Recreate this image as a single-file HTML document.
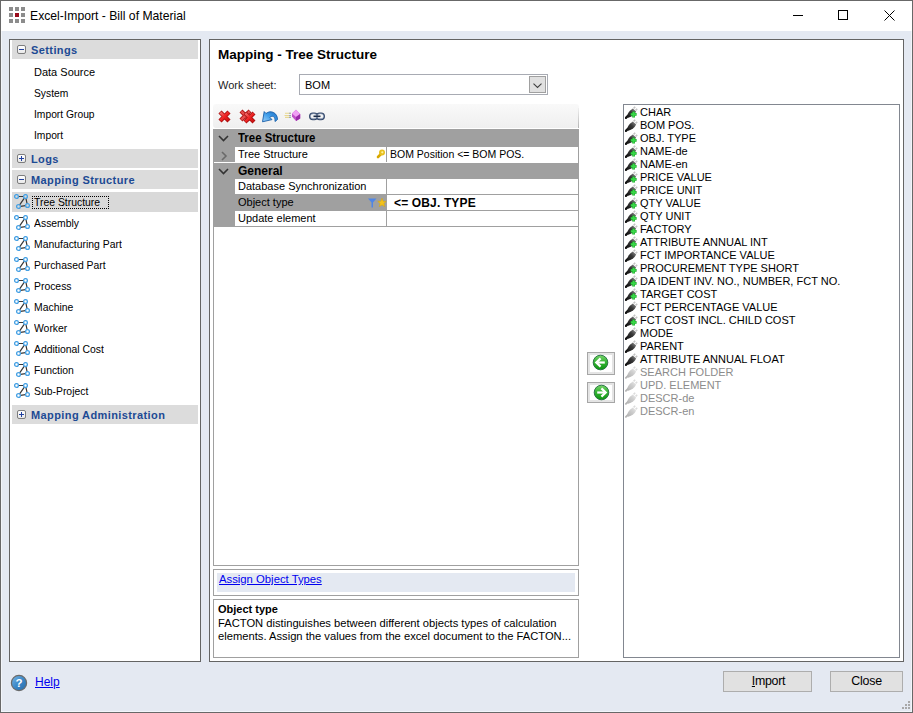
<!DOCTYPE html>
<html><head><meta charset="utf-8">
<style>
*{margin:0;padding:0;box-sizing:border-box}
html,body{width:913px;height:713px;overflow:hidden;background:#e4e9f2}
body{position:relative;font-family:"Liberation Sans",sans-serif;font-size:11px;color:#000}
.a{position:absolute;white-space:nowrap}
#win{position:absolute;left:0;top:0;width:913px;height:713px;border:1px solid #686868;background:#e4e9f2}#win:after{content:"";position:absolute;left:0;top:0;right:0;bottom:0;border:1px solid #f2f5fa}
#title{position:absolute;left:1px;top:1px;width:911px;height:30px;background:#fff}
.box{position:absolute;background:#fff;border:1px solid #646464}
.hdr{position:absolute;left:2px;width:186px;height:19px;background:#dcdcdc;color:#1c4a94;font-weight:bold;font-size:11px;letter-spacing:.4px}
.hdr span{position:absolute;left:19px;top:4px}
.exp{position:absolute;left:5px;top:5px;width:9px;height:9px;border:1px solid #7d7d7d;border-radius:2px;background:linear-gradient(#fff,#e8e8e8)}
.exp:before{content:"";position:absolute;left:1px;top:3px;width:5px;height:1px;background:#2040a0}
.exp.p:after{content:"";position:absolute;left:3px;top:1px;width:1px;height:5px;background:#2040a0}
.it{position:absolute;left:24px;font-size:11px}
.ti{position:absolute;left:24px;font-size:11px;transform:scaleX(.945);transform-origin:0 0}
.ticon{position:absolute;left:4px;width:17px;height:16px}
.grid .cat{position:absolute;left:0;width:365px;background:#a0a0a0;font-weight:bold;font-size:12px}
.grid .row{position:absolute;left:0;width:366px;height:16px}
.li{position:absolute;left:16px;font-size:11px}
.lic{position:absolute;left:1px;width:13px;height:13px}
.btn{position:absolute;background:#e1e1e1;border:1px solid #adadad;text-align:center;font-size:12px}
</style></head><body>
<svg width="0" height="0" style="position:absolute">
<defs>
<linearGradient id="pg" x1="0" y1="1" x2="1" y2="0"><stop offset="0" stop-color="#111"/><stop offset=".55" stop-color="#3a3a3a"/><stop offset="1" stop-color="#9a9a9a"/></linearGradient>
<linearGradient id="pgd" x1="0" y1="1" x2="1" y2="0"><stop offset="0" stop-color="#b0b0b0"/><stop offset=".6" stop-color="#cfcfcf"/><stop offset="1" stop-color="#ececec"/></linearGradient>
<symbol id="plug" viewBox="0 0 13 13"><path d="M0.9 11.9L2.9 9.9" stroke="#111" stroke-width="2.2" stroke-linecap="round"/><path d="M1.8 10.8C2.6 7.5 4.5 4.6 7.8 2.6L11.2 5.6C9.6 8.8 7 10.8 3.2 11.8Z" fill="url(#pg)"/><path d="M8.6 2.4L10.2 0.8M10.6 4.4L12.2 2.8" stroke="#c4c4c4" stroke-width="1.6"/></symbol>
<symbol id="plugP" viewBox="0 0 13 13"><use href="#plug"/><path d="M8.6 5.4V11.4M5.6 8.4H11.6" stroke="#1faa2a" stroke-width="2.8"/><path d="M8.6 5.9V10.9M6.1 8.4H11.1" stroke="#3ad84a" stroke-width="1.6"/></symbol>
<symbol id="plugD" viewBox="0 0 13 13"><path d="M0.9 11.9L2.9 9.9" stroke="#b4b4b4" stroke-width="1.8" stroke-linecap="round"/><path d="M1.8 10.8C2.6 7.5 4.5 4.6 7.8 2.6L11.2 5.6C9.6 8.8 7 10.8 3.2 11.8Z" fill="url(#pgd)"/><path d="M8.6 2.4L10.2 0.8M10.6 4.4L12.2 2.8" stroke="#dcdcdc" stroke-width="1.6"/></symbol>
<linearGradient id="gg" x1="0" y1="0" x2="0" y2="1"><stop offset="0" stop-color="#7ad46a"/><stop offset=".45" stop-color="#36b636"/><stop offset="1" stop-color="#0c9410"/></linearGradient>
<symbol id="garrL" viewBox="0 0 17 17"><circle cx="8.5" cy="8.5" r="7.3" fill="url(#gg)" stroke="#1f6a40" stroke-width="0.9"/><path d="M4.8 8.5H12.8" stroke="#fff" stroke-width="2.2"/><path d="M8.6 4.4L4.3 8.5L8.6 12.6" stroke="#fff" stroke-width="2.2" fill="none"/></symbol>
<symbol id="garrR" viewBox="0 0 17 17"><circle cx="8.5" cy="8.5" r="7.3" fill="url(#gg)" stroke="#1f6a40" stroke-width="0.9"/><path d="M4.2 8.5H12.2" stroke="#fff" stroke-width="2.2"/><path d="M8.4 4.4L12.7 8.5L8.4 12.6" stroke="#fff" stroke-width="2.2" fill="none"/></symbol>
</defs></svg>
<div id="win"></div>
<div id="title">
  <svg class="a" style="left:7px;top:5px" width="17" height="17" viewBox="0 0 17 17"><g fill="#8c8c8c"><rect x="1" y="1" width="4" height="4"/><rect x="7" y="1" width="4" height="4"/><rect x="13" y="1" width="4" height="4"/><rect x="1" y="7" width="4" height="4"/><rect x="13" y="7" width="4" height="4"/><rect x="1" y="13" width="4" height="4"/><rect x="7" y="13" width="4" height="4"/><rect x="13" y="13" width="4" height="4"/></g><rect x="7" y="7" width="4" height="4" fill="#9a0c1c"/></svg>
  <div class="a" style="left:29px;top:8px;font-size:12.2px;color:#000">Excel-Import - Bill of Material</div>
  <div class="a" style="left:792px;top:14px;width:10px;height:1px;background:#000"></div>
  <div class="a" style="left:837px;top:9px;width:10px;height:10px;border:1px solid #000"></div>
  <svg class="a" style="left:883px;top:9px" width="11" height="11" viewBox="0 0 11 11"><path d="M0.5 0.5L10.5 10.5M10.5 0.5L0.5 10.5" stroke="#000" stroke-width="1"/></svg>
</div>

<!-- Left panel -->
<div class="box" style="left:9px;top:39px;width:192px;height:623px">
  <div class="hdr" style="top:0px"><div class="exp"></div><span>Settings</span></div>
  <div class="it" style="top:26px">Data Source</div>
  <div class="it" style="top:47px;transform:scaleX(.935);transform-origin:0 0">System</div>
  <div class="it" style="top:68px;transform:scaleX(.935);transform-origin:0 0">Import Group</div>
  <div class="it" style="top:89px;transform:scaleX(.935);transform-origin:0 0">Import</div>
  <div class="hdr" style="top:109px"><div class="exp p"></div><span>Logs</span></div>
  <div class="hdr" style="top:130px"><div class="exp"></div><span>Mapping Structure</span></div>
  <div class="a" style="left:2px;top:152px;width:186px;height:20px;background:#d9d9d9"></div>
  <svg class="ticon" style="top:154px" viewBox="0 0 17 16" width="17" height="16"><path d="M4.4 2.5H9.6M10.35 4.14L5.65 10.86M11.93 4.45L13.07 9.55M6.49 12.28L11.51 11.72" stroke="#383838" stroke-width="1.2" fill="none"/><g fill="none" stroke="#44a0e4" stroke-width="1.3"><circle cx="2.5" cy="2.5" r="1.9"/><circle cx="11.5" cy="2.5" r="1.9"/><circle cx="4.5" cy="12.5" r="1.9"/><circle cx="13.5" cy="11.5" r="1.9"/></g></svg>
  <div class="a" style="left:22px;top:156px;width:77px;height:13px;border:1px dotted #000"></div><div class="ti" style="top:156px">Tree Structure</div>
  <svg class="ticon" style="top:175px" viewBox="0 0 17 16" width="17" height="16"><path d="M4.4 2.5H9.6M10.35 4.14L5.65 10.86M11.93 4.45L13.07 9.55M6.49 12.28L11.51 11.72" stroke="#383838" stroke-width="1.2" fill="none"/><g fill="none" stroke="#44a0e4" stroke-width="1.3"><circle cx="2.5" cy="2.5" r="1.9"/><circle cx="11.5" cy="2.5" r="1.9"/><circle cx="4.5" cy="12.5" r="1.9"/><circle cx="13.5" cy="11.5" r="1.9"/></g></svg>
  <div class="ti" style="top:177px">Assembly</div>
  <svg class="ticon" style="top:196px" viewBox="0 0 17 16" width="17" height="16"><path d="M4.4 2.5H9.6M10.35 4.14L5.65 10.86M11.93 4.45L13.07 9.55M6.49 12.28L11.51 11.72" stroke="#383838" stroke-width="1.2" fill="none"/><g fill="none" stroke="#44a0e4" stroke-width="1.3"><circle cx="2.5" cy="2.5" r="1.9"/><circle cx="11.5" cy="2.5" r="1.9"/><circle cx="4.5" cy="12.5" r="1.9"/><circle cx="13.5" cy="11.5" r="1.9"/></g></svg>
  <div class="ti" style="top:198px">Manufacturing Part</div>
  <svg class="ticon" style="top:217px" viewBox="0 0 17 16" width="17" height="16"><path d="M4.4 2.5H9.6M10.35 4.14L5.65 10.86M11.93 4.45L13.07 9.55M6.49 12.28L11.51 11.72" stroke="#383838" stroke-width="1.2" fill="none"/><g fill="none" stroke="#44a0e4" stroke-width="1.3"><circle cx="2.5" cy="2.5" r="1.9"/><circle cx="11.5" cy="2.5" r="1.9"/><circle cx="4.5" cy="12.5" r="1.9"/><circle cx="13.5" cy="11.5" r="1.9"/></g></svg>
  <div class="ti" style="top:219px">Purchased Part</div>
  <svg class="ticon" style="top:238px" viewBox="0 0 17 16" width="17" height="16"><path d="M4.4 2.5H9.6M10.35 4.14L5.65 10.86M11.93 4.45L13.07 9.55M6.49 12.28L11.51 11.72" stroke="#383838" stroke-width="1.2" fill="none"/><g fill="none" stroke="#44a0e4" stroke-width="1.3"><circle cx="2.5" cy="2.5" r="1.9"/><circle cx="11.5" cy="2.5" r="1.9"/><circle cx="4.5" cy="12.5" r="1.9"/><circle cx="13.5" cy="11.5" r="1.9"/></g></svg>
  <div class="ti" style="top:240px">Process</div>
  <svg class="ticon" style="top:259px" viewBox="0 0 17 16" width="17" height="16"><path d="M4.4 2.5H9.6M10.35 4.14L5.65 10.86M11.93 4.45L13.07 9.55M6.49 12.28L11.51 11.72" stroke="#383838" stroke-width="1.2" fill="none"/><g fill="none" stroke="#44a0e4" stroke-width="1.3"><circle cx="2.5" cy="2.5" r="1.9"/><circle cx="11.5" cy="2.5" r="1.9"/><circle cx="4.5" cy="12.5" r="1.9"/><circle cx="13.5" cy="11.5" r="1.9"/></g></svg>
  <div class="ti" style="top:261px">Machine</div>
  <svg class="ticon" style="top:280px" viewBox="0 0 17 16" width="17" height="16"><path d="M4.4 2.5H9.6M10.35 4.14L5.65 10.86M11.93 4.45L13.07 9.55M6.49 12.28L11.51 11.72" stroke="#383838" stroke-width="1.2" fill="none"/><g fill="none" stroke="#44a0e4" stroke-width="1.3"><circle cx="2.5" cy="2.5" r="1.9"/><circle cx="11.5" cy="2.5" r="1.9"/><circle cx="4.5" cy="12.5" r="1.9"/><circle cx="13.5" cy="11.5" r="1.9"/></g></svg>
  <div class="ti" style="top:282px">Worker</div>
  <svg class="ticon" style="top:301px" viewBox="0 0 17 16" width="17" height="16"><path d="M4.4 2.5H9.6M10.35 4.14L5.65 10.86M11.93 4.45L13.07 9.55M6.49 12.28L11.51 11.72" stroke="#383838" stroke-width="1.2" fill="none"/><g fill="none" stroke="#44a0e4" stroke-width="1.3"><circle cx="2.5" cy="2.5" r="1.9"/><circle cx="11.5" cy="2.5" r="1.9"/><circle cx="4.5" cy="12.5" r="1.9"/><circle cx="13.5" cy="11.5" r="1.9"/></g></svg>
  <div class="ti" style="top:303px">Additional Cost</div>
  <svg class="ticon" style="top:322px" viewBox="0 0 17 16" width="17" height="16"><path d="M4.4 2.5H9.6M10.35 4.14L5.65 10.86M11.93 4.45L13.07 9.55M6.49 12.28L11.51 11.72" stroke="#383838" stroke-width="1.2" fill="none"/><g fill="none" stroke="#44a0e4" stroke-width="1.3"><circle cx="2.5" cy="2.5" r="1.9"/><circle cx="11.5" cy="2.5" r="1.9"/><circle cx="4.5" cy="12.5" r="1.9"/><circle cx="13.5" cy="11.5" r="1.9"/></g></svg>
  <div class="ti" style="top:324px">Function</div>
  <svg class="ticon" style="top:343px" viewBox="0 0 17 16" width="17" height="16"><path d="M4.4 2.5H9.6M10.35 4.14L5.65 10.86M11.93 4.45L13.07 9.55M6.49 12.28L11.51 11.72" stroke="#383838" stroke-width="1.2" fill="none"/><g fill="none" stroke="#44a0e4" stroke-width="1.3"><circle cx="2.5" cy="2.5" r="1.9"/><circle cx="11.5" cy="2.5" r="1.9"/><circle cx="4.5" cy="12.5" r="1.9"/><circle cx="13.5" cy="11.5" r="1.9"/></g></svg>
  <div class="ti" style="top:345px">Sub-Project</div>
  <div class="hdr" style="top:365px"><div class="exp p"></div><span>Mapping Administration</span></div>
</div>

<!-- Right panel -->
<div class="box" style="left:209px;top:39px;width:695px;height:623px">
  <div class="a" style="left:8px;top:7px;font-size:13.5px;font-weight:bold">Mapping - Tree Structure</div>
  <div class="a" style="left:8px;top:39px;color:#1c1c24">Work sheet:</div>
  <div class="a" style="left:89px;top:34px;width:249px;height:21px;border:1px solid #a8abb3;background:#fff">
    <div class="a" style="left:5px;top:4px">BOM</div>
    <div class="a" style="left:229px;top:1px;width:17px;height:17px;background:#e0e0e0;border:1px solid #a0a0a0">
      <svg class="a" style="left:3px;top:6px" width="9" height="6" viewBox="0 0 9 6"><path d="M0.5 0.7L4.5 4.5L8.5 0.7" fill="none" stroke="#404040" stroke-width="1.1"/></svg>
    </div>
  </div>
  <!-- toolbar -->
  <div class="a" style="left:3px;top:64px;width:366px;height:24px;background:linear-gradient(#f9f9f9,#efefef);border-radius:3px"></div><div class="a" style="left:368px;top:68px;width:1px;height:20px;background:linear-gradient(#f0f0f0,#b4b4b4)"></div>
  <svg class="a" style="left:3px;top:64px" width="120" height="24" viewBox="0 0 120 24">
    <defs>
      <linearGradient id="rx" x1="0" y1="0" x2="1" y2="1"><stop offset="0" stop-color="#f07070"/><stop offset=".5" stop-color="#f02424"/><stop offset="1" stop-color="#c81010"/></linearGradient>
      <linearGradient id="ba" x1="0" y1="1" x2="1" y2="0"><stop offset="0" stop-color="#9fd2fa"/><stop offset=".5" stop-color="#3f9eea"/><stop offset="1" stop-color="#1e6cc0"/></linearGradient>
    </defs>
    <g stroke-linecap="butt">
      <path d="M7 8L16 17M16 8L7 17" stroke="#a80c0c" stroke-width="4.4"/>
      <path d="M7.4 8.4L15.6 16.6M15.6 8.4L7.4 16.6" stroke="url(#rx)" stroke-width="2.8"/>
      <path d="M28 7L37 16M37 7L28 16" stroke="#a80c0c" stroke-width="4.2"/>
      <path d="M28.4 7.4L36.6 15.6M36.6 7.4L28.4 15.6" stroke="#e65050" stroke-width="2.6"/>
      <path d="M32 9L41 18M41 9L32 18" stroke="#a80c0c" stroke-width="4.2"/>
      <path d="M32.4 9.4L40.6 17.6M40.6 9.4L32.4 17.6" stroke="url(#rx)" stroke-width="2.6"/>
    </g>
    <path d="M64.5 15.5C64.5 9 58 5.5 53 9.5L51.2 7.6L49.5 17.8L59 15.6L56.8 13.4C59.5 11 62.5 12.5 62 17.5Z" fill="url(#ba)" stroke="#1a5fa8" stroke-width="0.9" stroke-linejoin="round"/>
    <path d="M72 9.3H78M71.5 11.5H78M72 13.4H78" stroke="#e8d890" stroke-width="1.1"/>
    <path d="M76 9.3H78M76 11.5H78M76 13.4H78" stroke="#a0a8b8" stroke-width="1.1"/>
    <path d="M83 5.8L87.2 10V14.5L83 17L79 12.5V9.5Z" fill="#c050c8"/>
    <path d="M83 5.8L87.2 10L83 13L79 9.5Z" fill="#f0a0f4"/>
    <path d="M87.2 10V14.5L83 17V13Z" fill="#9a2aa8"/>
    <rect x="96.8" y="9.2" width="7.6" height="6.2" rx="3.1" fill="none" stroke="#34486a" stroke-width="1.6"/>
    <rect x="103.6" y="9.2" width="7.6" height="6.2" rx="3.1" fill="none" stroke="#34486a" stroke-width="1.6"/>
    <rect x="97.4" y="9.8" width="6.4" height="5" rx="2.5" fill="none" stroke="#b8c8dc" stroke-width="0.6"/>
    <rect x="104.2" y="9.8" width="6.4" height="5" rx="2.5" fill="none" stroke="#b8c8dc" stroke-width="0.6"/>
    <path d="M100.5 12.3H107.5" stroke="#1e2e4a" stroke-width="1.6"/>
  </svg>
  <!-- grid -->
  <div class="a grid" style="left:3px;top:89px;width:366px;height:437px;border:1px solid #a0a0a0;border-top:none;background:#fff">
    <div class="cat" style="top:0;height:18px"><svg class="a" style="left:4px;top:6px" width="11" height="7" viewBox="0 0 11 7"><path d="M1 1L5.5 5.5L10 1" stroke="#333" stroke-width="1.6" fill="none"/></svg><div class="a" style="left:24px;top:2px;transform:scaleX(.952);transform-origin:0 0">Tree Structure</div></div>
    <div class="a" style="left:0;top:18px;width:21px;height:15px;background:#a0a0a0"></div>
    <svg class="a" style="left:7px;top:22px" width="7" height="10" viewBox="0 0 7 10"><path d="M1 1L5 5L1 9" stroke="#6a6a6a" stroke-width="1.6" fill="none"/></svg>
    <div class="a" style="left:172px;top:18px;width:1px;height:15px;background:#a0a0a0"></div>
    <div class="a" style="left:24px;top:19px">Tree Structure</div>
    <svg class="a" style="left:162px;top:20px" width="10" height="10" viewBox="0 0 10 10"><path d="M5 5L2 8" stroke="#d8a800" stroke-width="2.6" stroke-linecap="round"/><circle cx="6" cy="3.6" r="3" fill="#e8c020"/><circle cx="6.3" cy="3.3" r="1.1" fill="#fff2a0"/></svg>
    <div class="a" style="left:176px;top:19px;transform:scaleX(.955);transform-origin:0 0">BOM Position &lt;= BOM POS.</div>
    <div class="cat" style="top:34px;height:16px"><svg class="a" style="left:4px;top:5px" width="11" height="7" viewBox="0 0 11 7"><path d="M1 1L5.5 5.5L10 1" stroke="#333" stroke-width="1.6" fill="none"/></svg><div class="a" style="left:24px;top:1px">General</div></div>
    <div class="a" style="left:0;top:50px;width:21px;height:47px;background:#a0a0a0"></div>
    <div class="a" style="left:21px;top:65px;width:344px;height:1px;background:#a0a0a0"></div>
    <div class="a" style="left:21px;top:66px;width:151px;height:15px;background:#a0a0a0"></div>
    <div class="a" style="left:21px;top:81px;width:344px;height:1px;background:#a0a0a0"></div>
    <div class="a" style="left:0;top:97px;width:364px;height:1px;background:#a0a0a0"></div>
    <div class="a" style="left:172px;top:50px;width:1px;height:48px;background:#a0a0a0"></div>
    <div class="a" style="left:24px;top:51px">Database Synchronization</div>
    <div class="a" style="left:24px;top:67px">Object type</div>
    <svg class="a" style="left:153px;top:68px" width="20" height="11" viewBox="0 0 20 11"><path d="M1 1.5H9.5L6 5.5V10.5H4.5V5.5Z" fill="#4f86e6"/><path d="M15 1.2L16.2 4.2L19.2 4.4L16.9 6.4L17.7 9.6L15 7.9L12.3 9.6L13.1 6.4L10.8 4.4L13.8 4.2Z" fill="#f2c21c" stroke="#d9a400" stroke-width="0.5"/></svg>
    <div class="a" style="left:24px;top:83px">Update element</div>
    <div class="a" style="left:180px;top:67px;font-weight:bold;font-size:12px;letter-spacing:.15px">&lt;= OBJ. TYPE</div>
  </div>
  <!-- link -->
  <div class="a" style="left:3px;top:529px;width:366px;height:27px;border:1px solid #a0a0a0;background:#fff">
    <div class="a" style="left:3px;top:3px;width:358px;height:19px;background:#e4e9f2"></div>
    <div class="a" style="left:5px;top:3px;color:#0000f0;text-decoration:underline;font-size:11.3px">Assign Object Types</div>
  </div>
  <!-- description -->
  <div class="a" style="left:3px;top:559px;width:366px;height:59px;border:1px solid #a0a0a0;background:#fff">
    <div class="a" style="left:4px;top:3px;font-weight:bold">Object type</div>
    <div class="a" style="left:4px;top:17px;font-size:11.2px">FACTON distinguishes between different objects types of calculation</div>
    <div class="a" style="left:4px;top:30px;font-size:11.2px">elements. Assign the values from the excel document to the FACTON...</div>
  </div>
  <!-- arrow buttons -->
  <div class="a" style="left:377px;top:312px;width:28px;height:23px;background:#fff;border:1px solid #a6a6a6;box-shadow:inset 0 0 0 2px #e4e4e4"><svg class="a" style="left:4px;top:1px" width="17" height="17" viewBox="0 0 17 17"><use href="#garrL"/></svg></div>
  <div class="a" style="left:377px;top:342px;width:28px;height:21px;background:#fff;border:1px solid #a6a6a6;box-shadow:inset 0 0 0 2px #e4e4e4"><svg class="a" style="left:5px;top:1px" width="17" height="17" viewBox="0 0 17 17"><use href="#garrR"/></svg></div>
  <!-- list -->
  <div class="a" style="left:413px;top:64px;width:277px;height:554px;border:1px solid #828790;background:#fff">
    <svg class="lic" style="top:1px" width="13" height="13"><use href="#plugP"/></svg><div class="li" style="top:1px;color:#000">CHAR</div>
    <svg class="lic" style="top:14px" width="13" height="13"><use href="#plug"/></svg><div class="li" style="top:14px;color:#000">BOM POS.</div>
    <svg class="lic" style="top:27px" width="13" height="13"><use href="#plugP"/></svg><div class="li" style="top:27px;color:#000">OBJ. TYPE</div>
    <svg class="lic" style="top:40px" width="13" height="13"><use href="#plugP"/></svg><div class="li" style="top:40px;color:#000">NAME-de</div>
    <svg class="lic" style="top:53px" width="13" height="13"><use href="#plugP"/></svg><div class="li" style="top:53px;color:#000">NAME-en</div>
    <svg class="lic" style="top:66px" width="13" height="13"><use href="#plugP"/></svg><div class="li" style="top:66px;color:#000">PRICE VALUE</div>
    <svg class="lic" style="top:79px" width="13" height="13"><use href="#plugP"/></svg><div class="li" style="top:79px;color:#000">PRICE UNIT</div>
    <svg class="lic" style="top:92px" width="13" height="13"><use href="#plugP"/></svg><div class="li" style="top:92px;color:#000">QTY VALUE</div>
    <svg class="lic" style="top:105px" width="13" height="13"><use href="#plugP"/></svg><div class="li" style="top:105px;color:#000">QTY UNIT</div>
    <svg class="lic" style="top:118px" width="13" height="13"><use href="#plugP"/></svg><div class="li" style="top:118px;color:#000">FACTORY</div>
    <svg class="lic" style="top:131px" width="13" height="13"><use href="#plugP"/></svg><div class="li" style="top:131px;color:#000">ATTRIBUTE ANNUAL INT</div>
    <svg class="lic" style="top:144px" width="13" height="13"><use href="#plug"/></svg><div class="li" style="top:144px;color:#000">FCT IMPORTANCE VALUE</div>
    <svg class="lic" style="top:157px" width="13" height="13"><use href="#plugP"/></svg><div class="li" style="top:157px;color:#000">PROCUREMENT TYPE SHORT</div>
    <svg class="lic" style="top:170px" width="13" height="13"><use href="#plugP"/></svg><div class="li" style="top:170px;color:#000">DA IDENT INV. NO., NUMBER, FCT NO.</div>
    <svg class="lic" style="top:183px" width="13" height="13"><use href="#plugP"/></svg><div class="li" style="top:183px;color:#000">TARGET COST</div>
    <svg class="lic" style="top:196px" width="13" height="13"><use href="#plug"/></svg><div class="li" style="top:196px;color:#000">FCT PERCENTAGE VALUE</div>
    <svg class="lic" style="top:209px" width="13" height="13"><use href="#plugP"/></svg><div class="li" style="top:209px;color:#000">FCT COST INCL. CHILD COST</div>
    <svg class="lic" style="top:222px" width="13" height="13"><use href="#plug"/></svg><div class="li" style="top:222px;color:#000">MODE</div>
    <svg class="lic" style="top:235px" width="13" height="13"><use href="#plug"/></svg><div class="li" style="top:235px;color:#000">PARENT</div>
    <svg class="lic" style="top:248px" width="13" height="13"><use href="#plug"/></svg><div class="li" style="top:248px;color:#000">ATTRIBUTE ANNUAL FLOAT</div>
    <svg class="lic" style="top:261px" width="13" height="13"><use href="#plugD"/></svg><div class="li" style="top:261px;color:#8c8c8c">SEARCH FOLDER</div>
    <svg class="lic" style="top:274px" width="13" height="13"><use href="#plugD"/></svg><div class="li" style="top:274px;color:#8c8c8c">UPD. ELEMENT</div>
    <svg class="lic" style="top:287px" width="13" height="13"><use href="#plugD"/></svg><div class="li" style="top:287px;color:#8c8c8c">DESCR-de</div>
    <svg class="lic" style="top:300px" width="13" height="13"><use href="#plugD"/></svg><div class="li" style="top:300px;color:#8c8c8c">DESCR-en</div>
  </div>
</div>

<!-- bottom -->
<svg class="a" style="left:10px;top:674px" width="18" height="18" viewBox="0 0 18 18"><defs><linearGradient id="hb" x1="0" y1="0" x2="1" y2="1"><stop offset="0" stop-color="#7ab8e8"/><stop offset=".5" stop-color="#3b88c8"/><stop offset="1" stop-color="#2a6aa8"/></linearGradient></defs><circle cx="9" cy="9" r="7.6" fill="url(#hb)" stroke="#6a6a6a" stroke-width="1.2"/><text x="9" y="13.4" text-anchor="middle" font-family="Liberation Sans" font-weight="bold" font-size="11.5" fill="#fff">?</text></svg>
<div class="a" style="left:35px;top:675px;color:#0000ee;text-decoration:underline;font-size:12px">Help</div>
<div class="btn" style="left:723px;top:671px;width:89px;height:21px"><div style="position:relative;top:2px;left:1px;font-size:12.4px;letter-spacing:-0.3px"><u>I</u>mport</div></div>
<div class="btn" style="left:830px;top:671px;width:73px;height:21px"><div style="position:relative;top:2px;font-size:12.4px;letter-spacing:-0.2px">Close</div></div>
<svg class="a" style="left:902px;top:701px" width="9" height="9" viewBox="0 0 9 9"><g fill="#a8a8a8"><rect x="6" y="0" width="2" height="2"/><rect x="3" y="3" width="2" height="2"/><rect x="6" y="3" width="2" height="2"/><rect x="0" y="6" width="2" height="2"/><rect x="3" y="6" width="2" height="2"/><rect x="6" y="6" width="2" height="2"/></g></svg>
</body></html>
